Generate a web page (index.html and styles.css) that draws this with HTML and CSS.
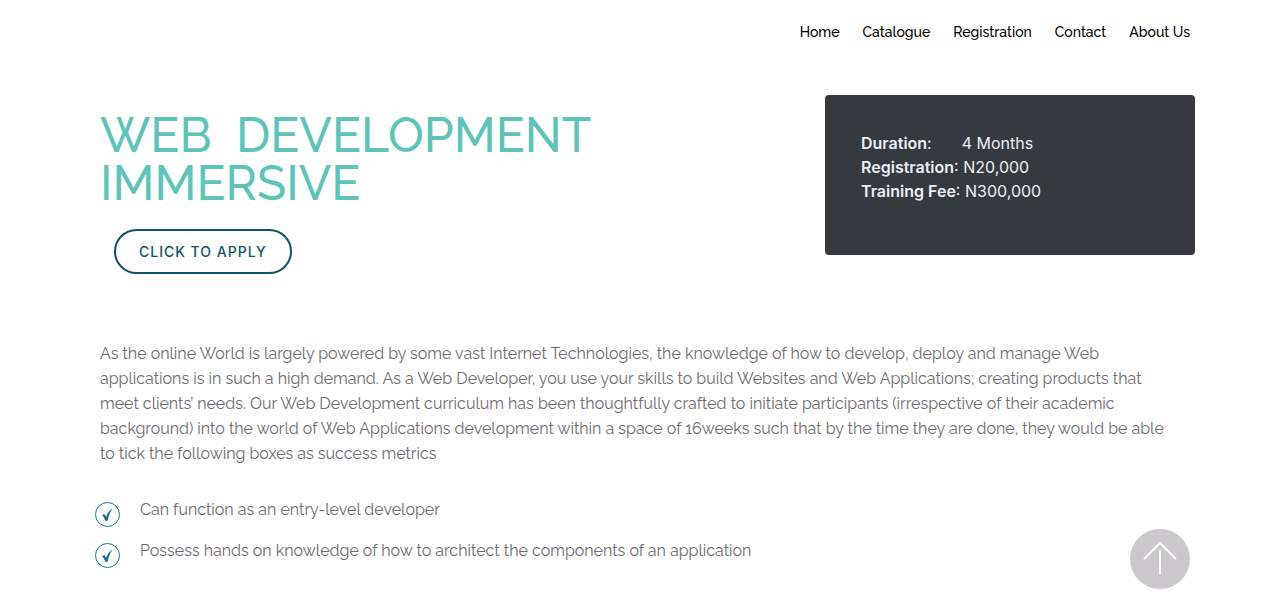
FILE: index.html
```html
<!DOCTYPE html>
<html lang="en">
<head>
<meta charset="utf-8">
<meta name="viewport" content="width=device-width, initial-scale=1">
<title>Web Development Immersive</title>
<link rel="stylesheet" href="styles.css">
</head>
<body>
<header class="site-header">
  <nav class="nav" aria-label="Main">
    <a href="#home">Home</a>
    <a href="#catalogue">Catalogue</a>
    <a href="#registration">Registration</a>
    <a href="#contact">Contact</a>
    <a href="#about">About Us</a>
  </nav>
</header>
<main class="page">
  <section class="hero">
    <div class="intro">
      <h1 class="title">WEB&nbsp; DEVELOPMENT<br>IMMERSIVE</h1>
      <a class="apply" href="#apply">CLICK TO APPLY</a>
    </div>
    <aside class="card">
      <p><strong>Duration</strong>:<span class="months">4 Months</span></p>
      <p><strong>Registration</strong>: N20,000</p>
      <p><strong>Training Fee</strong>: N300,000</p>
    </aside>
  </section>
  <p class="summary">As the online World is largely powered by some vast Internet Technologies, the knowledge of how to develop, deploy and manage Web applications is in such a high demand. As a Web Developer, you use your skills to build Websites and Web Applications; creating products that meet clients’ needs. Our Web Development curriculum has been thoughtfully crafted to initiate participants (irrespective of their academic background) into the world of Web Applications development within a space of 16weeks such that by the time they are done, they would be able to tick the following boxes as success metrics</p>
  <ul class="metrics">
    <li>
      <svg class="tick" viewBox="0 0 25 25" aria-hidden="true"><circle cx="12.500" cy="12.500" r="12"/><path d="M7 13.300l2.300-1.300 1.900 2.800c1.200-3.600 3-6.300 6.300-8.300-2.400 3.500-3.900 7.400-4.900 12.200h-2.300C9.600 16.700 8.500 14.600 7 13.300z"/></svg>
      <span>Can function as an entry-level developer</span>
    </li>
    <li>
      <svg class="tick" viewBox="0 0 25 25" aria-hidden="true"><circle cx="12.500" cy="12.500" r="12"/><path d="M7 13.300l2.300-1.300 1.900 2.800c1.200-3.600 3-6.300 6.300-8.300-2.400 3.500-3.900 7.400-4.900 12.200h-2.300C9.600 16.700 8.500 14.600 7 13.300z"/></svg>
      <span>Possess hands on knowledge of how to architect the components of an application</span>
    </li>
  </ul>
</main>
<a class="to-top" href="#home" aria-label="Back to top">
  <svg viewBox="0 0 60 60" aria-hidden="true"><path d="M30 45V21M14 30l16-16 16 16"/></svg>
</a>
</body>
</html>
```
FILE: styles.css
```css
* { box-sizing: border-box; }
body {
  margin: 0;
  background: #fefefe;
  color: #6f6b70;
  font-family: Raleway, Lato, "Open Sans", sans-serif;
  font-size: 16px;
  line-height: 25px;
}
p, ul, h1 { margin: 0; padding: 0; }
.site-header { padding: 20px 90px 0; }
.nav { display: flex; justify-content: flex-end; gap: 23px; }
.nav a {
  color: #000;
  font-size: 14px;
  font-weight: 500;
  line-height: 24px;
  text-decoration: none;
}
.page { padding: 51px 85px 40px 100px; }
.hero { display: flex; justify-content: space-between; align-items: flex-start; }
.intro { padding-top: 16px; }
.title {
  color: #5ec4ba;
  font-size: 48px;
  font-weight: 500;
  line-height: 48px;
}
.apply {
  display: inline-block;
  margin: 22px 0 0 14px;
  padding: 0 23px;
  border: 2px solid #0f5566;
  border-radius: 23px;
  color: #0f5566;
  font-family: Inter, sans-serif;
  font-size: 14px;
  font-weight: 500;
  line-height: 41px;
  letter-spacing: 1px;
  text-decoration: none;
}
.card {
  width: 370px;
  padding: 36px 36px 52px;
  border-radius: 4px;
  background: #343a40;
  color: #eceef4;
  font-family: Inter, sans-serif;
  font-size: 16px;
  line-height: 24px;
}
.card strong { font-weight: 600; }
.months { margin-left: 30px; }
.summary { padding: 67px 25px 0 0; }
.metrics { margin: 31px 0 0 -5px; list-style: none; }
.metrics li { display: flex; gap: 20px; margin-bottom: 10px; min-height: 31px; }
.tick { flex: none; width: 25px; height: 25px; margin-top: 5px; fill: none; stroke: #12788e; }
.tick path { fill: #12708c; stroke: none; }
.to-top {
  position: fixed;
  right: 90px;
  bottom: 25px;
  width: 60px;
  height: 60px;
  border-radius: 50%;
  background: #cac8cb;
}
.to-top svg { display: block; fill: none; stroke: #fff; stroke-width: 2; }
```
